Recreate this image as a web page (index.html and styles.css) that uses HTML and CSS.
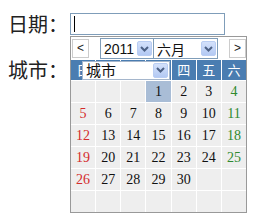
FILE: index.html
```html
<!DOCTYPE html>
<html lang="zh-CN">
  <head>
    <meta charset="UTF-8" />
    <title>日期选择</title>
    <link rel="stylesheet" href="styles.css">
  </head>
  <body>
    <!-- 表单 -->
    <div class="form">
      <div class="row">
        <span class="label">日期：</span>
        <div class="field">
          <div class="input"><span class="caret"></span></div>

          <!-- 日历弹出层 -->
          <div class="calendar">
            <div class="toolbar">
              <span class="nav prev">&lt;</span>
              <div class="select year">
                <span class="value">2011</span>
                <span class="drop"><svg width="9" height="6" viewBox="0 0 9 6"><path d="M1 1 L4.5 4.5 L8 1" fill="none" stroke="#4d6185" stroke-width="2"/></svg></span>
              </div>
              <div class="select month">
                <span class="value">六月</span>
                <span class="drop"><svg width="9" height="6" viewBox="0 0 9 6"><path d="M1 1 L4.5 4.5 L8 1" fill="none" stroke="#4d6185" stroke-width="2"/></svg></span>
              </div>
              <span class="nav next">&gt;</span>
            </div>
            <div class="days">
              <span class="head">日</span><span class="head">一</span><span class="head">二</span><span class="head">三</span><span class="head">四</span><span class="head">五</span><span class="head">六</span>
              <span></span><span></span><span></span><span class="today">1</span><span>2</span><span>3</span><span class="sat">4</span>
              <span class="sun">5</span><span>6</span><span>7</span><span>8</span><span>9</span><span>10</span><span class="sat">11</span>
              <span class="sun">12</span><span>13</span><span>14</span><span>15</span><span>16</span><span>17</span><span class="sat">18</span>
              <span class="sun">19</span><span>20</span><span>21</span><span>22</span><span>23</span><span>24</span><span class="sat">25</span>
              <span class="sun">26</span><span>27</span><span>28</span><span>29</span><span>30</span><span></span><span></span>
              <span></span><span></span><span></span><span></span><span></span><span></span><span></span>
            </div>
          </div>
        </div>
      </div>

      <div class="row city">
        <span class="label">城市：</span>
        <div class="select city-select">
          <span class="value">城市</span>
          <span class="drop"><svg width="9" height="6" viewBox="0 0 9 6"><path d="M1 1 L4.5 4.5 L8 1" fill="none" stroke="#4d6185" stroke-width="2"/></svg></span>
        </div>
      </div>
    </div>
  </body>
</html>
```

FILE: styles.css
```css
/* 通用样式 */
html,
body {
  height: 100%;
}

body {
  margin: 0;
  padding: 13px 8px 0;
  box-sizing: border-box;
  background-color: #fff;
  color: #222;
  font-family: "Noto Sans CJK SC", sans-serif;
}

.row {
  display: flex;
  align-items: center;
}

.row.city {
  margin-top: 24px;
}

.label {
  width: 62px;
  font-size: 20px;
  line-height: 22px;
  color: #222;
}

/* 输入框 */
.field {
  position: relative;
}

.input {
  width: 150px;
  height: 20px;
  border: 1px solid #7f9db9;
  display: flex;
  align-items: center;
  padding-left: 3px;
}

.caret {
  width: 1px;
  height: 16px;
  background-color: #000;
}

/* 日历 */
.calendar {
  position: absolute;
  top: 23px;
  left: 0;
  width: 175px;
  border: 1px solid #999;
  background-color: #fff;
  z-index: 1;
}

.toolbar {
  display: flex;
  align-items: center;
  height: 23px;
}

.nav {
  width: 15px;
  height: 17px;
  border: 1px solid #ccc;
  font-family: "Liberation Sans", sans-serif;
  font-size: 12px;
  line-height: 17px;
  text-align: center;
  color: #222;
}

.prev {
  margin-left: 1px;
}

.next {
  margin-left: auto;
}

/* 下拉框 */
.select {
  display: flex;
  align-items: center;
  border: 1px solid #7f9db9;
  background-color: #fff;
  box-sizing: border-box;
}

.select .value {
  flex: 1;
  padding-left: 3px;
  font-size: 14px;
  line-height: 16px;
  color: #111;
}

.drop {
  width: 15px;
  height: 15px;
  margin-right: 1px;
  background: linear-gradient(#d4e1fb, #b3c9f3);
  border: 1px solid #b9cdf3;
  border-radius: 2px;
  box-sizing: border-box;
  display: flex;
  align-items: center;
  justify-content: center;
}

.year {
  width: 54px;
  height: 21px;
  margin-left: 11px;
}

.year .value {
  font-family: "Liberation Sans", sans-serif;
}

.month {
  width: 65px;
  height: 21px;
  margin-left: -1px;
}

.city-select {
  position: relative;
  z-index: 2;
  width: 88px;
  height: 19px;
  margin-left: 12px;
  border-color: #a5b6cc;
}

.city-select .value {
  font-size: 15px;
}

/* 日期格子 */
.days {
  display: grid;
  grid-template-columns: repeat(7, 1fr);
  grid-template-rows: 20px repeat(6, 21px);
  gap: 1px;
  background-color: #fff;
}

.days span {
  display: block;
  min-height: 20px;
  background-color: #eee;
  font-family: "Liberation Serif", serif;
  font-size: 14px;
  line-height: 21px;
  text-align: center;
  color: #111;
}

.days .head {
  background-color: #4a7db1;
  color: #fff;
  font-family: "Noto Sans CJK SC", sans-serif;
  font-size: 13px;
  line-height: 20px;
}

.days .today {
  background-color: #a9bdd6;
}

.days .sun {
  color: #d42b2b;
}

.days .sat {
  color: #2f8a2f;
}
```
